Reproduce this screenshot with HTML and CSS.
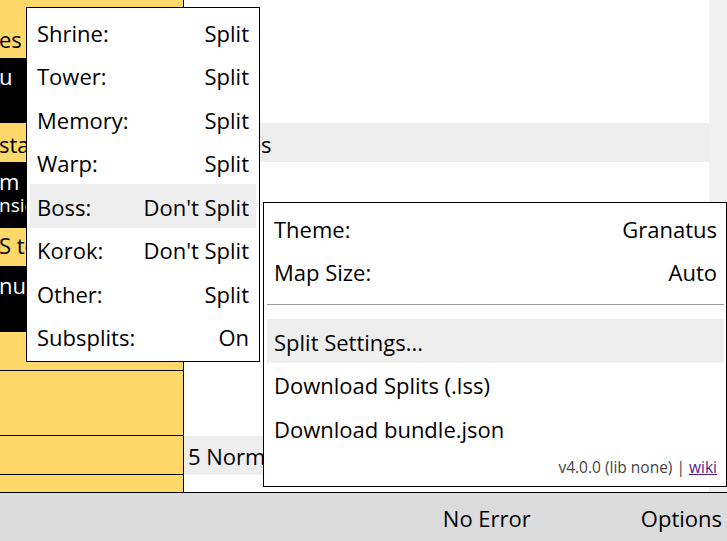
FILE: index.html
```html
<!DOCTYPE html>
<html>
<head>
<meta charset="utf-8">
<link rel="stylesheet" href="styles.css">
</head>
<body>
<div class="app">
  <div class="main">
    <div class="splits">
      <div class="srow h58 p24"><span class="clip">es</span></div>
      <div class="srow dark h65 p3"><span class="clip">u</span></div>
      <div class="srow h39 p6"><span class="clip">sta</span></div>
      <div class="srow dark h66 p4"><span class="clip">m</span><span class="sub clip">nsic</span></div>
      <div class="srow h38 p2"><span class="clip">S to</span></div>
      <div class="srow dark h66 p4"><span class="clip">nut</span></div>
      <div class="srow h39 line"></div>
      <div class="srow h65 line"></div>
      <div class="srow h39 line"></div>
      <div class="srow h17"></div>
    </div>
    <div class="detail">
      <div class="drow h58"></div>
      <div class="drow h65"></div>
      <div class="drow h39 p6 shade wide">Shrines</div>
      <div class="drow h66"></div>
      <div class="drow h38"></div>
      <div class="drow h66"></div>
      <div class="drow h39"></div>
      <div class="drow h65"></div>
      <div class="drow h39 p5 shade">5 Normal Shrines</div>
      <div class="drow h17"></div>
    </div>
    <div class="scroll"></div>
  </div>
  <div class="bar">
    <span class="status">No Error</span>
    <span class="options">Options</span>
  </div>

  <div class="menu split-menu">
    <div class="item"><span>Shrine:</span><span>Split</span></div>
    <div class="item"><span>Tower:</span><span>Split</span></div>
    <div class="item"><span>Memory:</span><span>Split</span></div>
    <div class="item"><span>Warp:</span><span>Split</span></div>
    <div class="item hover"><span>Boss:</span><span>Don't Split</span></div>
    <div class="item"><span>Korok:</span><span>Don't Split</span></div>
    <div class="item"><span>Other:</span><span>Split</span></div>
    <div class="item"><span>Subsplits:</span><span>On</span></div>
  </div>

  <div class="menu options-menu">
    <div class="item"><span>Theme:</span><span>Granatus</span></div>
    <div class="item"><span>Map Size:</span><span>Auto</span></div>
    <div class="sep"></div>
    <div class="item hover"><span>Split Settings...</span></div>
    <div class="item"><span>Download Splits (.lss)</span></div>
    <div class="item"><span>Download bundle.json</span></div>
    <div class="version">v4.0.0 (lib none) | <a href="#" class="wiki">wiki</a></div>
  </div>
</div>
</body>
</html>
```

FILE: styles.css
```css
* { box-sizing: border-box; }
html, body {
  margin: 0;
  padding: 0;
}
body {
  width: 727px;
  height: 541px;
  overflow: hidden;
  font-family: "Open Sans", "Noto Sans", sans-serif;
  font-size: 22px;
  line-height: 30px;
  color: #000;
  background: #fff;
}
.app {
  position: relative;
  width: 727px;
  height: 541px;
  display: flex;
  flex-direction: column;
}
.main {
  height: 492px;
  display: flex;
}
.splits {
  width: 184px;
  border-right: 1px solid #000;
  background: #fed868;
  display: flex;
  flex-direction: column;
  overflow: hidden;
}
.srow {
  overflow: hidden;
  white-space: nowrap;
  display: flex;
  flex-direction: column;
}
.srow.dark { background: #000; color: #fff; }
.srow.line { border-bottom: 1px solid #000; }
.clip { margin-left: -1px; }
.sub {
  font-size: 19px;
  line-height: 22px;
  margin-top: -2px;
}
.h58 { height: 58px; }
.h65 { height: 65px; }
.h39 { height: 39px; }
.h66 { height: 66px; }
.h38 { height: 38px; }
.h17 { height: 17px; }
.p24 { padding-top: 24px; }
.p6 { padding-top: 6px; }
.p5 { padding-top: 5px; }
.p4 { padding-top: 4px; }
.p3 { padding-top: 3px; }
.p2 { padding-top: 2px; }
.detail {
  flex: 1;
  display: flex;
  flex-direction: column;
  background: #fff;
}
.drow {
  padding-left: 4px;
  white-space: nowrap;
  overflow: hidden;
}
.drow.wide { padding-left: 11px; }
.drow.shade { background: #eeeeee; }
.scroll {
  width: 18px;
  background: #f0f0f0;
}
.bar {
  flex: 1;
  border-top: 1px solid #000;
  background: #dcdcdc;
  display: flex;
  justify-content: flex-end;
  align-items: flex-start;
  padding-top: 10px;
  padding-right: 5px;
}
.status { margin-right: 110px; }

.menu {
  position: absolute;
  background: #fff;
  border: 1px solid #000;
  display: flex;
  flex-direction: column;
}
.split-menu {
  left: 26px;
  top: 7px;
  width: 234px;
  height: 355px;
  padding: 2px 3px 3px 3px;
}
.options-menu {
  left: 263px;
  top: 202px;
  width: 464px;
  height: 285px;
  padding: 3px 2px 3px 3px;
}
.item {
  height: 43.5px;
  padding: 7.5px 7px 0 7px;
  display: flex;
  justify-content: space-between;
  white-space: nowrap;
}
.item.hover { background: #eeeeee; }
.sep {
  height: 26px;
  padding-top: 11px;
}
.sep::before {
  content: "";
  display: block;
  border-top: 1px solid #9a9a9a;
}
.version {
  height: 32.5px;
  padding: 7.5px 7px 0 7px;
  text-align: right;
  font-size: 15.5px;
  line-height: 20px;
  color: #444;
}
.wiki { color: #551a8b; }
```
